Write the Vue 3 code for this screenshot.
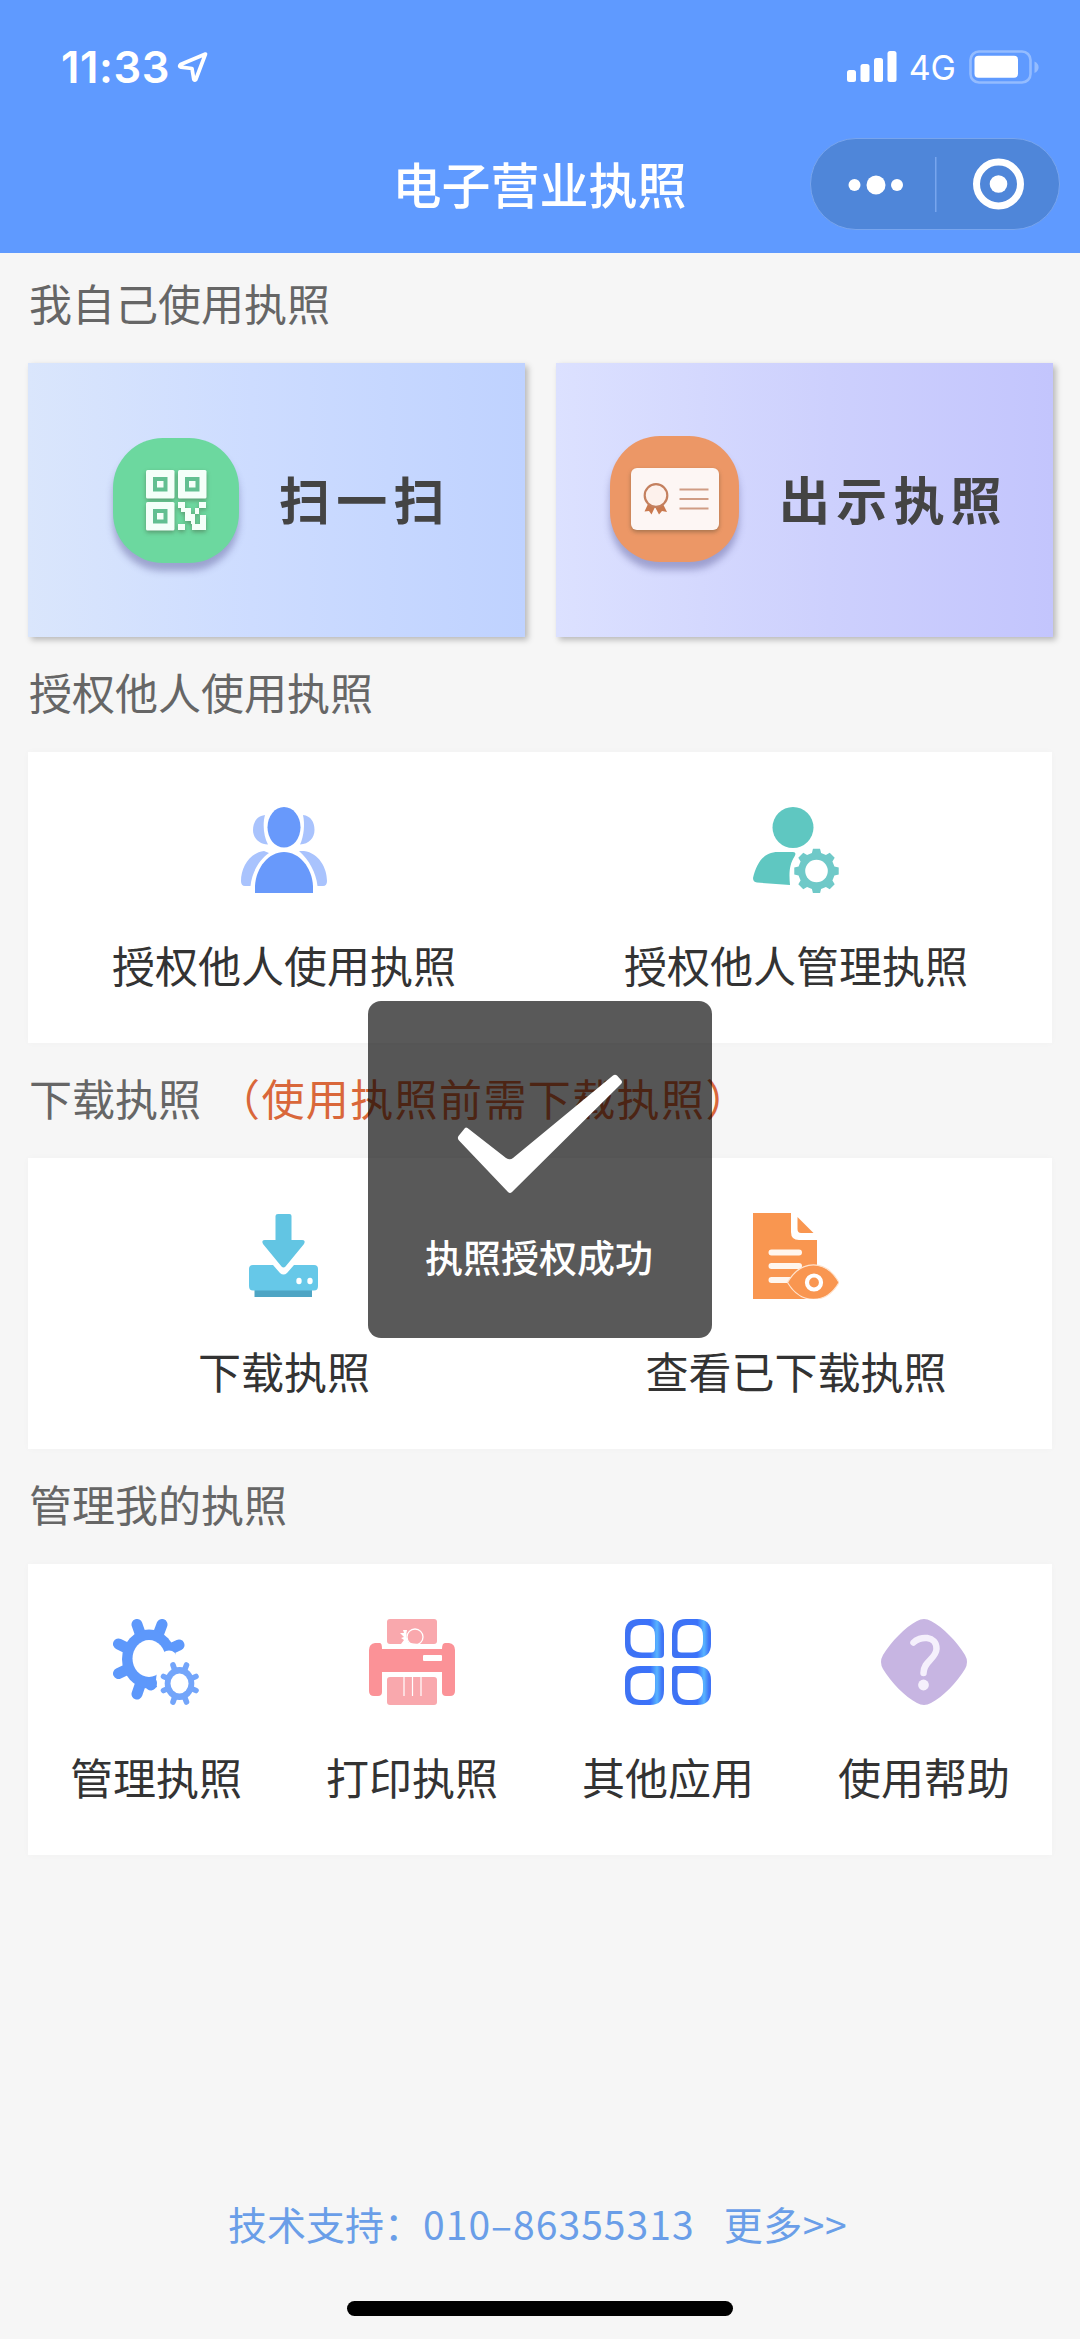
<script setup>
// Square-toothed cog outline around (cx, cy)
function cog(cx, cy, inner, outer, teeth) {
  const step = (Math.PI * 2) / teeth
  const pts = []
  for (let i = 0; i < teeth; i++) {
    const a = i * step
    for (const [d, r] of [[-0.32, inner], [-0.2, outer], [0.2, outer], [0.32, inner]]) {
      pts.push(`${(cx + r * Math.cos(a + d * step)).toFixed(2)} ${(cy + r * Math.sin(a + d * step)).toFixed(2)}`)
    }
  }
  return `M${pts.join('L')}Z`
}

const userGear = cog(63.5, 64, 18.5, 22.5, 8)
</script>

<template>
  <div class="page">
    <header class="top">
      <div class="status">
        <div class="clock">
          <span class="time">11:33</span>
          <svg class="loc" width="32" height="32" viewBox="0 0 32 32">
            <path d="M28.500 3 3.500 13.500Q1.500 15.500 4 16.200L15 17.500 16.800 28.500Q17.500 30 18.800 28.500Z" fill="none" stroke="#fff" stroke-width="3.700" stroke-linejoin="round" />
          </svg>
        </div>
        <div class="signals">
          <svg width="50" height="31" viewBox="0 0 50 31" fill="#fff">
            <rect x="0" y="19" width="9" height="12" rx="2.500" />
            <rect x="13.500" y="13" width="9" height="18" rx="2.500" />
            <rect x="27" y="7" width="9" height="24" rx="2.500" />
            <rect x="40.500" y="0" width="9" height="31" rx="2.500" />
          </svg>
          <span class="net">4G</span>
          <svg class="battery" width="71" height="34" viewBox="0 0 71 34">
            <rect x="1.500" y="1.500" width="60" height="31" rx="8.500" fill="none" stroke="#94bcff" stroke-width="2.600" />
            <rect x="5.500" y="5.700" width="43.500" height="22" rx="4" fill="#fff" />
            <path d="M65.500 11.500C71 14 71 20.500 65.500 23Z" fill="#94bcff" />
          </svg>
        </div>
      </div>
      <div class="nav">
        <h1>电子营业执照</h1>
        <div class="capsule">
          <svg width="248" height="90" viewBox="0 0 248 90" fill="#fff">
            <circle cx="43.500" cy="46" r="6" />
            <circle cx="65" cy="46" r="9.500" />
            <circle cx="86" cy="46" r="6" />
            <rect x="124" y="18" width="1.500" height="55" fill="#78a5ee" />
            <circle cx="187.500" cy="45" r="22" fill="none" stroke="#fff" stroke-width="7" />
            <circle cx="187.500" cy="45" r="8.800" />
          </svg>
        </div>
      </div>
    </header>

    <main>
      <h2 class="first">我自己使用执照</h2>
      <div class="cards">
        <div class="card scan">
          <div class="badge green">
            <svg width="61" height="61" viewBox="0 0 61 61">
              <g fill="#f4fff9">
                <rect width="28.500" height="28.500" rx="1.500" />
                <rect x="32" width="28.500" height="28.500" rx="1.500" />
                <rect y="32" width="28.500" height="28.500" rx="1.500" />
                <path d="M32 32h7v6h6v6h4v10h-4v-3h-6v-9h-4v-4h-3zM53 32h7v6h-7zM49 38h4v6h-4zM54 45h6v15h-14v-6h8zM32 54h7v6h-7z" />
              </g>
              <g fill="none" stroke="#62bf91" stroke-width="4">
                <rect x="9" y="9" width="10.500" height="10.500" />
                <rect x="41" y="9" width="10.500" height="10.500" />
                <rect x="9" y="41" width="10.500" height="10.500" />
              </g>
            </svg>
          </div>
          <span class="card-text">扫一扫</span>
        </div>
        <div class="card show">
          <div class="badge orange">
            <svg width="88" height="62" viewBox="0 0 88 62">
              <rect width="88" height="62" rx="6" fill="#fdf6f4" />
              <path d="M17 36 13.500 43.500 18 43 20.500 46.500 24 39 28 46.500 31 43 36 44 32 36Z" fill="#c9794f" />
              <circle cx="25" cy="27.500" r="11.300" fill="#fdf1ec" stroke="#c4805f" stroke-width="2.200" />
              <path d="M48.500 21.500h29M48.500 31h29M48.500 40.500h29" stroke="#d09c84" stroke-width="2" />
            </svg>
          </div>
          <span class="card-text">出示执照</span>
        </div>
      </div>

      <h2>授权他人使用执照</h2>
      <div class="panel">
        <div class="item">
          <svg class="icon" viewBox="0 0 86 86">
            <g fill="#a9c3fd">
              <path d="M24 8C16 9 12 15 12 23S18 37 27 37.500C22.500 29 21.500 17 24 8Z" />
              <path d="M62 8C70 9 73.500 15 73.500 23S68 37 59 37.500C63 29 64 17 62 8Z" />
              <path d="M23 44C8 46 0 61 0 74Q0 79 4 79H9.500C11 65 18 53 28 46Z" />
              <path d="M63 44C78 46 86 61 86 74Q86 79 82 79H76.500C75 65 68 53 58 44Z" />
            </g>
            <g fill="#6899fb">
              <ellipse cx="43" cy="20.300" rx="16.500" ry="20.300" />
              <path d="M14 86V79C15 60 28 45 43 45S71 60 72 79V86Z" />
            </g>
          </svg>
          <span class="label">授权他人使用执照</span>
        </div>
        <div class="item">
          <svg class="icon" viewBox="0 0 86 86">
            <circle cx="40" cy="20.500" r="20.500" fill="#5fc7c1" />
            <path d="M4 75.500Q0 75 0 71C4 55 11 45 25 45H40Q44 45 41.500 49.500C36 58 36 67 37 78Z" fill="#5fc7c1" />
            <path :d="userGear" fill="#6fc9c8" />
            <circle cx="63.500" cy="64" r="11.300" fill="#fff" />
          </svg>
          <span class="label">授权他人管理执照</span>
        </div>
      </div>

      <h2>下载执照<span class="hint">（使用执照前需下载执照）</span></h2>
      <div class="panel">
        <div class="item">
          <svg class="icon" viewBox="0 0 86 86">
            <rect x="13.500" y="76" width="57.500" height="8" fill="#4ea5c4" />
            <path d="M12 52H32L39 60Q42.500 63 46 60L53 52H73Q77 52 77 56V73Q77 77.500 73 77.500H12Q8 77.500 8 73V56Q8 52 12 52Z" fill="#66c8e8" />
            <path d="M37 1H48.500Q50.500 1 50.500 3V27H61Q65 27 63 31L44.500 53.500Q42.500 55.500 40.500 53.500L22 31Q20 27 24 27H34.500V3Q34.500 1 37 1Z" fill="#62c5e3" />
            <ellipse cx="58" cy="68" rx="2.700" ry="3.200" fill="#fff" />
            <ellipse cx="69" cy="68" rx="2.700" ry="3.200" fill="#fff" />
          </svg>
          <span class="label">下载执照</span>
        </div>
        <div class="item">
          <svg class="icon" viewBox="0 0 86 86">
            <path d="M0 0H38V19Q38 27 46 27H64V86H0Z" fill="#f99650" />
            <path d="M44.500 4 60.500 20H48Q44.500 20 44.500 16Z" fill="#f99650" />
            <path d="M18.500 39.500H46M18.500 53H46M18.500 67H40" stroke="#fff6ee" stroke-width="6" stroke-linecap="round" />
            <path d="M34.500 69.500C48 46 73 46 86 69.500 73 92 48 92 34.500 69.500Z" fill="#f99650" stroke="#ffe3cd" stroke-width="1.200" />
            <circle cx="61" cy="69.500" r="7" fill="#f99650" stroke="#fff" stroke-width="4.200" />
          </svg>
          <span class="label">查看已下载执照</span>
        </div>
      </div>

      <h2>管理我的执照</h2>
      <div class="panel">
        <div class="item">
          <svg class="icon" viewBox="0 0 86 86">
            <path d="M36 40 24 5.500M36 40 49 5.500M36 40 66 26M36 40 38 66M36 40 24 75M36 40 5.500 54.500M36 40 5.500 25M36 60 38 65" stroke="#5d98fb" stroke-width="11" stroke-linecap="round" />
            <ellipse cx="36" cy="40" rx="27" ry="29.500" fill="#5d98fb" />
            <ellipse cx="36" cy="39.500" rx="16.500" ry="18.500" fill="#fff" />
            <circle cx="56" cy="39.500" r="8" fill="#fff" />
            <circle cx="68" cy="61" r="25" fill="#fff" />
            <circle cx="38.500" cy="64" r="5.500" fill="#5d98fb" />
            <path d="M66.500 64.500 60 46M66.500 64.500 73.500 46M66.500 64.500 83 57.500M66.500 64.500 83 71.500M66.500 64.500 73.500 83M66.500 64.500 60 83M66.500 64.500 50.500 71.500M66.500 64.500 50.500 57.500" stroke="#73a5fa" stroke-width="5.600" stroke-linecap="round" />
            <ellipse cx="66.500" cy="64.500" rx="14.800" ry="16.500" fill="#73a5fa" />
            <ellipse cx="66.500" cy="64.500" rx="9" ry="10" fill="#fff" />
          </svg>
          <span class="label">管理执照</span>
        </div>
        <div class="item">
          <svg class="icon" viewBox="0 0 86 86">
            <rect x="18" y="0" width="50" height="25" rx="3" fill="#f9a8ad" />
            <rect x="18" y="58" width="50" height="28" rx="3" fill="#f9a8ad" />
            <circle cx="46" cy="18" r="8" fill="none" stroke="#fff" stroke-width="1.300" />
            <path d="M38 11 34 11 35 14 31 14 35 18 32 19 35 21 32 25H50L40 24Q36 18 38 11Z" fill="#fff" />
            <path d="M35 58V77M43.500 58V77M52 58V77" stroke="#fff" stroke-width="1.200" />
            <path d="M6 24H11Q13 24 13 30H73Q73 24 76 24H80Q86 25 86 31V72Q86 77 81 77H77Q73 77 73 73V53H13V73Q13 77 9 77H5Q0 77 0 72V31Q0 25 6 24Z" fill="#fb9297" />
            <rect x="54" y="36" width="19" height="6" rx="1" fill="#fff" />
          </svg>
          <span class="label">打印执照</span>
        </div>
        <div class="item">
          <svg class="icon" viewBox="0 0 86 86">
            <defs>
              <linearGradient id="tile" x1="0" y1="0" x2="1" y2="0">
                <stop offset="0" stop-color="#3f73f3" />
                <stop offset="0.650" stop-color="#3b72fa" />
                <stop offset="0.820" stop-color="#58b4ff" />
                <stop offset="0.950" stop-color="#3f74f5" />
              </linearGradient>
            </defs>
            <g fill="url(#tile)">
              <path d="M14 0H25Q39 0 39 15V35Q39 39 35 39H15Q0 39 0 25V14Q0 0 14 0Z" />
              <path d="M61 0H72Q86 0 86 14V25Q86 39 71 39H51Q47 39 47 35V15Q47 0 61 0Z" />
              <path d="M15 47H35Q39 47 39 51V71Q39 86 25 86H14Q0 86 0 72V61Q0 47 15 47Z" />
              <path d="M51 47H71Q86 47 86 61V72Q86 86 72 86H61Q47 86 47 71V51Q47 47 51 47Z" />
            </g>
            <g fill="#fff">
              <path d="M16 6H20Q30 6 30 17V29Q30 33.500 26 33.500H17Q5.500 33 5.500 23V17Q5.500 6 16 6Z" />
              <path d="M63 6H67Q78 6 78 17V22Q78 33.500 67 33.500H56.500Q52.500 33.500 52.500 30V17Q52.500 6 63 6Z" />
              <path d="M17 54H26Q30 54 30 58V69Q30 81 20 81H16Q5.500 81 5.500 70V64Q5.500 54 17 54Z" />
              <path d="M56.500 54H67Q78 54 78 65V70Q78 81 67 81H63Q52.500 81 52.500 70V58Q52.500 54 56.500 54Z" />
            </g>
          </svg>
          <span class="label">其他应用</span>
        </div>
        <div class="item">
          <svg class="icon" viewBox="0 0 86 86">
            <path d="M36 2Q43-2 50 2C62 8 76 23 84 36Q88 43 84 50C76 63 62 78 50 84Q43 88 36 84C24 78 10 63 2 50Q-2 43 2 36C10 23 24 8 36 2Z" fill="#c7b5e2" />
            <path d="M32.500 23.500C38 17 56 16 55.500 30 55 40 42.500 42 42.500 54" fill="none" stroke="#f5f0fc" stroke-width="6.500" stroke-linecap="round" />
            <circle cx="42.500" cy="66" r="5.400" fill="#f5f0fc" />
          </svg>
          <span class="label">使用帮助</span>
        </div>
      </div>
    </main>

    <footer>
      <div class="support">
        <span>技术支持：</span><span class="phone">010–86355313</span><span class="more">更多&gt;&gt;</span>
      </div>
      <div class="home-bar"></div>
    </footer>

    <div class="toast">
      <svg width="166" height="120" viewBox="0 0 166 120">
        <path d="M8 54 1.500 62Q0 64.500 2 66.500L51 118Q53 120 55 118L164 10Q166 8 164 6L160 1.500Q158 0 156 1.500L56 84Q53 86.500 49 84L10.500 54Q9 53 8 54Z" fill="#fff" />
      </svg>
      <span>执照授权成功</span>
    </div>
  </div>
</template>

<style>
body {
  margin: 0;
  background: #f6f6f6;
}
</style>

<style scoped>
.page {
  position: relative;
  display: flex;
  flex-direction: column;
  width: 1080px;
  height: 2339px;
  overflow: hidden;
  background: #f6f6f6;
  font-family: "Noto Sans CJK SC", sans-serif;
  color: #333;
}
.top {
  height: 253px;
  background: #5f9aff;
  color: #fff;
}
.status {
  display: flex;
  justify-content: space-between;
  align-items: center;
  height: 133px;
  padding: 0 40px 0 61px;
  font-family: Inter, sans-serif;
}
.clock,
.signals {
  display: flex;
  align-items: center;
}
.time {
  font-size: 43.500px;
  font-weight: 600;
  line-height: 50px;
  letter-spacing: 0.600px;
}
.loc {
  margin-left: 7px;
}
.net {
  margin: 2px 13px 0 12px;
  font-size: 34px;
  line-height: 40px;
}
.nav {
  display: grid;
  grid-template-columns: 1fr auto 1fr;
  align-items: center;
  height: 102px;
}
h1 {
  grid-column: 2;
  margin: -2px 0 0 -1px;
  font-size: 49px;
  font-weight: 500;
  line-height: 60px;
}
.capsule {
  box-sizing: border-box;
  justify-self: end;
  width: 250px;
  height: 92px;
  margin-right: 20px;
  border: 1px solid #78a5ee;
  border-radius: 46px;
  background: #4f86d9;
}
.capsule svg {
  display: block;
}
main {
  padding: 0 28px;
}
h2 {
  display: flex;
  align-items: center;
  height: 115px;
  margin: 0;
  padding: 0 0 8px 1px;
  box-sizing: border-box;
  color: #666;
  font-size: 43px;
  font-weight: 400;
}
h2.first {
  height: 110px;
  padding-bottom: 13px;
}
.hint {
  margin-left: 16px;
  color: #d9673a;
  letter-spacing: 1.400px;
  white-space: nowrap;
}
.cards {
  display: grid;
  grid-template-columns: 497px 497px;
  gap: 31px;
}
.card {
  display: flex;
  align-items: center;
  height: 274px;
  box-sizing: border-box;
  box-shadow: 3px 3px 6px rgba(0, 0, 0, 0.25);
}
.scan {
  padding-left: 85px;
  background: linear-gradient(90deg, #dae6fc, #cddcff 45%, #bfd2ff);
}
.show {
  padding-left: 54px;
  background: linear-gradient(90deg, #dce1ff, #cdd0fd 55%, #c3c5fd);
}
.badge {
  display: flex;
  align-items: center;
  justify-content: center;
  width: 126px;
  height: 125px;
  border-radius: 50px;
  box-shadow: 0 8px 7px rgba(90, 90, 150, 0.45);
}
.badge svg {
  filter: drop-shadow(0 2px 2px rgba(60, 60, 40, 0.4));
}
.green {
  background: #6cd89f;
}
.orange {
  width: 129px;
  height: 126px;
  margin-top: -3px;
  background: #ec9766;
}
.card-text {
  margin: -4px 0 0 40px;
  color: #444;
  font-size: 51px;
  font-weight: 700;
  letter-spacing: 6.200px;
  white-space: nowrap;
}
.panel {
  display: flex;
  height: 291px;
  background: #fff;
  box-shadow: 0 0 8px rgba(0, 0, 0, 0.025);
}
.item {
  display: flex;
  flex: 1;
  flex-direction: column;
  align-items: center;
  padding-top: 55px;
}
.icon {
  width: 86px;
  height: 86px;
}
.label {
  margin-top: 41px;
  font-size: 43px;
  line-height: 60px;
  white-space: nowrap;
}
footer {
  display: flex;
  flex-direction: column;
  align-items: center;
  margin-top: auto;
}
.support {
  display: flex;
  width: 624px;
  color: #6a9ee8;
  font-size: 39px;
  line-height: 50px;
  white-space: nowrap;
}
.phone {
  letter-spacing: 1.050px;
}
.more {
  margin-left: 29px;
  letter-spacing: 0.600px;
}
.home-bar {
  width: 386px;
  height: 15px;
  margin: 53px 0 23px;
  border-radius: 8px;
  background: #000;
}
.toast {
  position: absolute;
  top: 1001px;
  left: 368px;
  display: flex;
  flex-direction: column;
  align-items: center;
  box-sizing: border-box;
  width: 344px;
  height: 337px;
  padding-top: 73px;
  border-radius: 13px;
  background: rgba(0, 0, 0, 0.65);
  color: #fff;
  font-size: 38px;
  font-weight: 500;
  line-height: 50px;
}
.toast span {
  margin: 37px 2px 0 0;
}
</style>
